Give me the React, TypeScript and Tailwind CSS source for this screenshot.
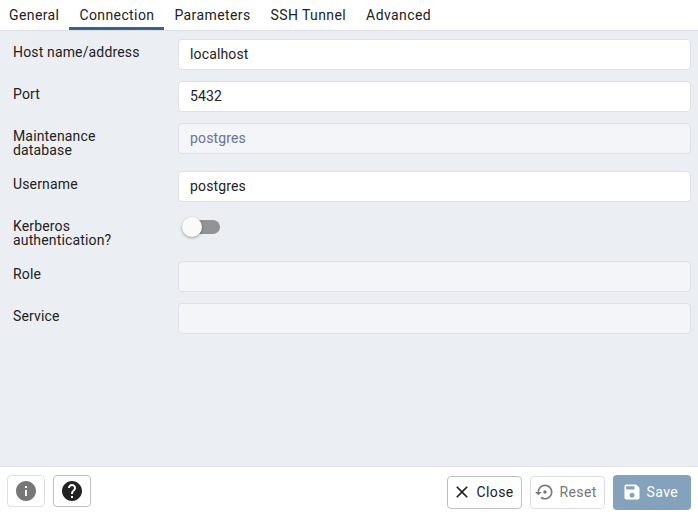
import type { ReactNode } from "react";
import { MdClose, MdHelp, MdInfo, MdSave, MdSettingsBackupRestore } from "react-icons/md";

const tabs = ["General", "Connection", "Parameters", "SSH Tunnel", "Advanced"];

function Row({ label, children }: { label: string; children: ReactNode }) {
  return (
    <div className="flex items-start">
      <div className="w-[165px] shrink-0 pt-[6px] pb-[3px] pr-8 leading-[14px]">{label}</div>
      <div className="min-w-0 flex-1">{children}</div>
    </div>
  );
}

function Field({ value = "", muted = false }: { value?: string; muted?: boolean }) {
  return (
    <div
      className={
        "flex h-[31px] items-center rounded border border-[#dde0e6] px-[11px] " +
        (muted ? "bg-[#f3f5f9] text-[#6b7390]" : "bg-white text-[#222222]")
      }
    >
      {value}
    </div>
  );
}

export default function App() {
  return (
    <div className="flex h-[517px] w-[698px] flex-col overflow-hidden bg-white font-['Roboto',sans-serif] text-[14px] tracking-[0.4px] text-[#222222]">
      <nav className="flex h-[31px] shrink-0 border-b border-[#dde0e6]">
        {tabs.map((tab) => (
          <div
            key={tab}
            className={
              "flex h-[30px] items-center border-b-3 px-[10px] pt-[3px] first:pl-[9px] " +
              (tab === "Connection" ? "border-[#3c6387]" : "border-transparent")
            }
          >
            {tab}
          </div>
        ))}
      </nav>
      <main className="flex flex-1 flex-col gap-[11px] bg-[#ebeef3] pt-2 pr-[7px] pl-[13px] tracking-[0.15px]">
        <Row label="Host name/address"><Field value="localhost" /></Row>
        <Row label="Port"><Field value="5432" /></Row>
        <Row label="Maintenance database"><Field value="postgres" muted /></Row>
        <Row label="Username"><Field value="postgres" /></Row>
        <Row label="Kerberos authentication?">
          <div className="mt-[7px] ml-2 flex h-[14px] w-[34px] items-center rounded-full bg-[#929396]">
            <div className="-ml-1 size-5 shrink-0 rounded-full bg-[#fafafa] shadow-[0_1px_3px_rgba(0,0,0,0.35)]" />
          </div>
        </Row>
        <Row label="Role"><Field muted /></Row>
        <Row label="Service"><Field muted /></Row>
      </main>
      <footer className="flex h-[51px] shrink-0 items-start border-t border-[#dde0e6] pt-2 pr-[7px] pl-[7px]">
        <button className="flex h-8 w-[38px] items-center justify-center rounded border border-[#dddfe3] text-[#777777]">
          <MdInfo size={24} />
        </button>
        <button className="ml-2 flex h-8 w-[38px] items-center justify-center rounded border border-[#bbbfc4]">
          <MdHelp size={24} />
        </button>
        <button className="mt-px ml-auto flex h-[33px] w-[75px] items-center rounded border border-[#bbbfc4] pl-1 tracking-[0.4px]">
          <MdClose size={20} className="mb-px" />
          <span className="ml-[4.5px]">Close</span>
        </button>
        <button className="mt-px ml-2 flex h-[33px] w-[75px] items-center rounded border border-[#dddfe3] pl-1 tracking-[0.4px] text-[#777777]">
          <MdSettingsBackupRestore size={20} className="mb-px" />
          <span className="ml-[4.5px]">Reset</span>
        </button>
        <button className="ml-2 flex h-[35px] w-[78px] items-center rounded bg-[#84a2bc] pl-[9px] tracking-[0.4px] text-white">
          <MdSave size={20} className="mb-px" />
          <span className="ml-[4.5px]">Save</span>
        </button>
      </footer>
    </div>
  );
}
